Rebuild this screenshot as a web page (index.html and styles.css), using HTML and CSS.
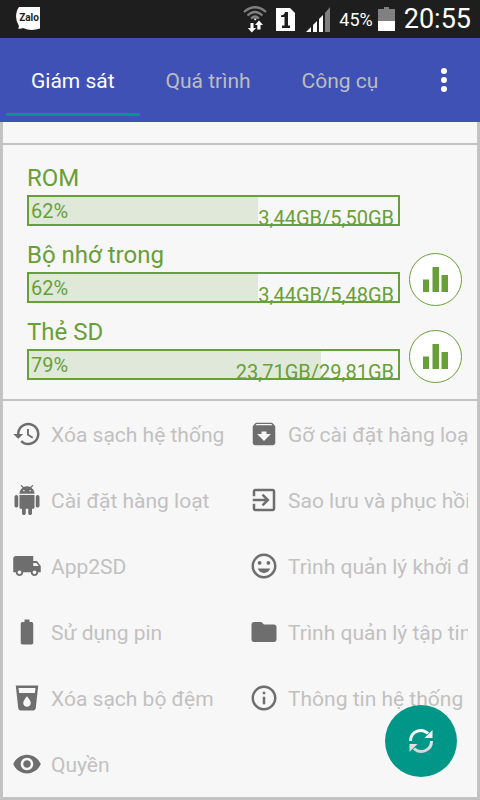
FILE: index.html
```html
<!DOCTYPE html>
<html lang="vi">
<head>
<meta charset="utf-8">
<meta name="viewport" content="width=device-width, initial-scale=1">
<title>Công cụ</title>
<link rel="stylesheet" href="styles.css">
</head>
<body>
<header class="status">
  <svg class="zalo" width="24" height="24" viewBox="0 0 24 24"><path fill="#fff" d="M3 0H24V21.500Q15 24.500 7 21Q5 22 2 21.500Q3.500 20 2.500 18Q0 14 0 9Q.5 3 3 0Z"/><text x="13" y="14" text-anchor="middle" class="zalo-name">Zalo</text></svg>
  <div class="status-right">
    <svg width="24" height="27" viewBox="0 0 24 27"><g fill="none" stroke="#808080" stroke-width="2.200"><path d="M1 6Q12-3.500 23 6"/><path d="M4.500 9.500Q12 2.500 19.500 9.500"/><path d="M8 12.500Q12 8.500 16 12.500"/></g><path fill="#fff" d="M10.500 12.500h3.500l-1.800 2zM7.500 17h3v5h2.500l-4.200 4.500L4.800 22h2.700zM14.300 23.500v-4.500h-2.300l4-4.500 4 4.500h-2.500v4.500z"/></svg>
    <svg width="19" height="23" viewBox="0 0 19 23"><path fill="#fff" d="M0 0H14L19 5V23H0Z"/><path fill="#1e1e1e" d="M5 7.500Q8.500 7 9 4H12V17.500H14V20H6V17.500H8.500V9H5Z"/></svg>
    <svg class="signal" width="24" height="25" viewBox="0 0 24 25"><path fill="#fff" d="M0 25 5 20V25ZM7 18l4-4V25H7ZM13 12l4-4V25h-4Z"/><path fill="#808080" d="M19 6l5-6V25h-5Z"/></svg>
    <span class="percent">45%</span>
    <svg width="17" height="24" viewBox="0 0 17 24"><path fill="#808080" d="M0 2H6V0H11V2H17V14H0Z"/><path fill="#fff" d="M0 14H17V24H0Z"/></svg>
    <time class="clock">20:55</time>
  </div>
</header>
<nav class="tabs">
  <button class="tab active" type="button">Giám sát</button>
  <button class="tab" type="button">Quá trình</button>
  <button class="tab" type="button">Công cụ</button>
  <button class="more" type="button" aria-label="Menu"><svg width="6" height="24" viewBox="0 0 6 24" fill="#fff"><circle cx="3" cy="3" r="3"/><circle cx="3" cy="12" r="3"/><circle cx="3" cy="21" r="3"/></svg></button>
</nav>
<main class="content">
  <div class="strip"></div>
  <section class="storage">
    <div class="volume">
      <div class="usage">
        <div class="label">ROM</div>
        <div class="bar"><div class="fill" style="width:62%"></div><span class="used">62%</span><span class="total">3,44GB/5,50GB</span></div>
      </div>
      <div class="spacer"></div>
    </div>
    <div class="volume">
      <div class="usage">
        <div class="label">Bộ nhớ trong</div>
        <div class="bar"><div class="fill" style="width:62%"></div><span class="used">62%</span><span class="total">3,44GB/5,48GB</span></div>
      </div>
      <button class="chart" type="button" aria-label="Bộ nhớ trong"><svg width="25" height="25" viewBox="0 0 25 25"><path fill="#689f38" d="M0 12.500H6V25H0ZM9.500 0H16V25H9.500ZM18.500 8H25V25H18.500Z"/></svg></button>
    </div>
    <div class="volume">
      <div class="usage">
        <div class="label">Thẻ SD</div>
        <div class="bar"><div class="fill" style="width:79%"></div><span class="used">79%</span><span class="total">23,71GB/29,81GB</span></div>
      </div>
      <button class="chart" type="button" aria-label="Thẻ SD"><svg width="25" height="25" viewBox="0 0 25 25"><path fill="#689f38" d="M0 12.500H6V25H0ZM9.500 0H16V25H9.500ZM18.500 8H25V25H18.500Z"/></svg></button>
    </div>
  </section>
  <section class="tools">
    <button class="tool" type="button"><svg class="icon" viewBox="0 0 24 24"><path d="M13 3c-4.970 0-9 4.030-9 9H1l3.890 3.890.07.14L9 12H6c0-3.870 3.130-7 7-7s7 3.130 7 7-3.130 7-7 7c-1.930 0-3.680-.79-4.940-2.060l-1.420 1.420C8.270 19.990 10.510 21 13 21c4.970 0 9-4.030 9-9s-4.030-9-9-9zm-1 5v5l4.280 2.540.72-1.210-3.500-2.080V8H12z"/></svg><span class="name">Xóa sạch hệ thống</span></button>
    <button class="tool" type="button"><svg class="icon" viewBox="0 0 24 24"><path d="M20.540 5.230l-1.390-1.680C18.880 3.210 18.470 3 18 3H6c-.47 0-.88.21-1.160.55L3.460 5.230C3.170 5.570 3 6.020 3 6.500V19c0 1.100.9 2 2 2h14c1.100 0 2-.9 2-2V6.500c0-.48-.17-.93-.46-1.270zM12 17.500L6.500 12H10v-2h4v2h3.500L12 17.500zM5.120 5l.81-1h12l.94 1H5.120z"/></svg><span class="name">Gỡ cài đặt hàng loạt</span></button>
    <button class="tool" type="button"><svg class="icon" viewBox="0 0 24 24"><path d="M6 18c0 .55.45 1 1 1h1v3.500c0 .83.67 1.500 1.500 1.500s1.500-.67 1.500-1.500V19h2v3.500c0 .83.67 1.500 1.500 1.500s1.500-.67 1.500-1.500V19h1c.55 0 1-.45 1-1V8H6v10zM3.500 8C2.670 8 2 8.670 2 9.500v7c0 .83.67 1.500 1.500 1.500S5 17.330 5 16.500v-7C5 8.670 4.330 8 3.500 8zm17 0c-.83 0-1.500.67-1.500 1.500v7c0 .83.67 1.500 1.500 1.500s1.500-.67 1.500-1.500v-7c0-.83-.67-1.500-1.500-1.500zm-4.970-5.840l1.300-1.300c.2-.2.2-.51 0-.71-.2-.2-.51-.2-.71 0l-1.480 1.480C13.850 1.230 12.950 1 12 1c-.96 0-1.860.23-2.660.63L7.850.15c-.2-.2-.51-.2-.71 0-.2.2-.2.51 0 .71l1.310 1.310C6.970 3.260 6 5.010 6 7h12c0-1.990-.97-3.750-2.470-4.840zM10 5H9V4h1v1zm5 0h-1V4h1v1z"/></svg><span class="name">Cài đặt hàng loạt</span></button>
    <button class="tool" type="button"><svg class="icon" viewBox="0 0 24 24"><path d="M10.090 15.590L11.500 17l5-5-5-5-1.410 1.410L12.670 11H3v2h9.670l-2.580 2.590zM19 3H5c-1.110 0-2 .9-2 2v4h2V5h14v14H5v-4H3v4c0 1.100.89 2 2 2h14c1.100 0 2-.9 2-2V5c0-1.100-.9-2-2-2z"/></svg><span class="name">Sao lưu và phục hồi</span></button>
    <button class="tool" type="button"><svg class="icon" viewBox="0 0 24 24"><path d="M20 8h-3V4H3c-1.100 0-2 .9-2 2v11h2c0 1.660 1.340 3 3 3s3-1.340 3-3h6c0 1.660 1.340 3 3 3s3-1.340 3-3h2v-5l-3-4zM6 18.500c-.83 0-1.500-.67-1.500-1.500s.67-1.500 1.500-1.500 1.500.67 1.500 1.500-.67 1.500-1.500 1.500zm13.500-9l1.960 2.500H17V9.500h2.500zm-1.500 9c-.83 0-1.500-.67-1.500-1.500s.67-1.500 1.500-1.500 1.500.67 1.500 1.500-.67 1.500-1.500 1.500z"/></svg><span class="name">App2SD</span></button>
    <button class="tool" type="button"><svg class="icon" viewBox="0 0 24 24"><path d="M11.990 2C6.470 2 2 6.480 2 12s4.470 10 9.990 10C17.520 22 22 17.520 22 12S17.520 2 11.990 2zM12 20c-4.420 0-8-3.580-8-8s3.580-8 8-8 8 3.580 8 8-3.580 8-8 8zm3.500-9c.83 0 1.500-.67 1.500-1.500S16.330 8 15.500 8 14 8.670 14 9.500s.67 1.500 1.500 1.500zm-7 0c.83 0 1.500-.67 1.500-1.500S9.330 8 8.500 8 7 8.670 7 9.500 7.670 11 8.500 11zM7 14h10c-.8 2.040-2.670 3.500-5 3.500S7.800 16.040 7 14z"/></svg><span class="name">Trình quản lý khởi động</span></button>
    <button class="tool" type="button"><svg class="icon" viewBox="0 0 24 24"><path d="M15.670 4H14V2h-4v2H8.330C7.600 4 7 4.600 7 5.330v15.330C7 21.400 7.600 22 8.330 22h7.330c.74 0 1.340-.6 1.340-1.330V5.330C17 4.600 16.400 4 15.670 4z"/></svg><span class="name">Sử dụng pin</span></button>
    <button class="tool" type="button"><svg class="icon" viewBox="0 0 24 24"><path d="M10 4H4c-1.100 0-1.990.9-1.990 2L2 18c0 1.100.9 2 2 2h16c1.100 0 2-.9 2-2V8c0-1.100-.9-2-2-2h-8l-2-2z"/></svg><span class="name">Trình quản lý tập tin</span></button>
    <button class="tool" type="button"><svg class="icon" viewBox="0 0 24 24"><path d="M3 2l2.010 18.230C5.130 21.230 5.970 22 7 22h10c1.030 0 1.870-.77 1.990-1.770L21 2H3zm9 17c-1.660 0-3-1.340-3-3 0-2 3-5.400 3-5.400s3 3.400 3 5.400c0 1.660-1.340 3-3 3zm6.330-11H5.670l-.44-4h13.530l-.43 4z"/></svg><span class="name">Xóa sạch bộ đệm</span></button>
    <button class="tool" type="button"><svg class="icon" viewBox="0 0 24 24"><path d="M11 17h2v-6h-2v6zm1-15C6.480 2 2 6.480 2 12s4.480 10 10 10 10-4.480 10-10S17.520 2 12 2zm0 18c-4.410 0-8-3.590-8-8s3.590-8 8-8 8 3.590 8 8-3.590 8-8 8zM11 9h2V7h-2v2z"/></svg><span class="name">Thông tin hệ thống</span></button>
    <button class="tool" type="button"><svg class="icon" viewBox="0 0 24 24"><path d="M12 4.500C7 4.500 2.730 7.610 1 12c1.730 4.390 6 7.500 11 7.500s9.270-3.110 11-7.500c-1.730-4.390-6-7.500-11-7.500zM12 17c-2.760 0-5-2.240-5-5s2.240-5 5-5 5 2.240 5 5-2.240 5-5 5zm0-8c-1.660 0-3 1.340-3 3s1.340 3 3 3 3-1.340 3-3-1.340-3-3-3z"/></svg><span class="name">Quyền</span></button>
  </section>
  <button class="refresh" type="button" aria-label="Làm mới"><svg width="26" height="26" viewBox="0 0 26 26"><defs><linearGradient id="shine" x1="0" y1="0" x2="0" y2="26" gradientUnits="userSpaceOnUse"><stop offset="0" stop-color="#fff"/><stop offset="1" stop-color="#d0d0d0"/></linearGradient></defs><g fill="none" stroke="url(#shine)" stroke-width="3"><path d="M2.500 13A10.300 10.300 0 0 1 20 5.500"/><path d="M23.500 13A10.300 10.300 0 0 1 6 20.500"/></g><path fill="url(#shine)" d="M24.500 2V10H16.500ZM1.500 24V16H9.500Z"/></svg></button>
</main>
</body>
</html>
```
FILE: styles.css
```css
* { box-sizing: border-box; }

body {
  margin: 0;
  min-height: 100vh;
  display: flex;
  flex-direction: column;
  background: #f7f7f7;
  font-family: Roboto, "Noto Sans", sans-serif;
}

button {
  margin: 0;
  padding: 0;
  border: 0;
  background: none;
  font: inherit;
  color: inherit;
}

svg { display: block; flex: none; }

.status {
  height: 38px;
  padding: 0 9px 0 16px;
  display: flex;
  align-items: center;
  justify-content: space-between;
  background: #1e1e1e;
  color: #fff;
}

.zalo-name {
  font-family: Roboto, sans-serif;
  font-size: 10px;
  font-weight: 700;
  fill: #1e1e1e;
}

.status-right { display: flex; align-items: center; gap: 9px; }
.percent { font-size: 18px; line-height: 36px; padding-top: 2px; margin-right: -4px; }
.signal { margin-left: 2px; }
.clock { font-size: 27px; line-height: 38px; }

.tabs {
  height: 84px;
  padding: 0 6px;
  display: flex;
  gap: 1px;
  background: #3f51b5;
  color: #bdbdbd;
  font-size: 21px;
}

.tab {
  padding: 10px 25px 0;
  margin-bottom: 6px;
  border-bottom: 3px solid transparent;
  white-space: nowrap;
}

.tab.active { color: #fff; border-color: #009688; }

.more { margin-left: auto; padding: 0 27px; }

.content {
  position: relative;
  flex: 1;
  border: solid #c3c3c3;
  border-width: 0 3px 3px;
}

.strip { height: 21px; }

.storage {
  padding: 20px 15px 16px 24px;
  border: solid #c3c3c3;
  border-width: 2px 0;
  display: flex;
  flex-direction: column;
  gap: 13px;
  color: #689f38;
}

.volume { display: flex; gap: 9px; min-height: 64px; }
.usage { flex: 1; }
.label { font-size: 24px; line-height: 26px; height: 30px; }

.bar {
  position: relative;
  height: 31px;
  border: 2px solid #689f38;
  font-size: 20px;
  line-height: 28px;
}

.fill { height: 100%; background: #e0e9d9; }
.used { position: absolute; left: 2px; top: 0; }
.total { position: absolute; right: 4px; top: 7px; }

.spacer, .chart { width: 53px; height: 53px; margin-top: 11px; }

.chart {
  display: grid;
  place-items: center;
  border: 1px solid #689f38;
  border-radius: 50%;
  background: #fff;
}

.tools { display: grid; grid-template-columns: 1fr 1fr; }

.tool {
  height: 66px;
  min-width: 0;
  padding: 0 9px;
  display: flex;
  align-items: center;
  gap: 9px;
  text-align: left;
  font-size: 21px;
  color: #c1c1c1;
}

.icon { width: 30px; height: 30px; fill: #6e6e6e; }
.name { flex: 1; padding-top: 2px; overflow: hidden; white-space: nowrap; line-height: 32px; }

.refresh {
  position: absolute;
  right: 20px;
  bottom: 20px;
  width: 72px;
  height: 72px;
  border-radius: 50%;
  display: grid;
  place-items: center;
  background: #009688;
}
```
